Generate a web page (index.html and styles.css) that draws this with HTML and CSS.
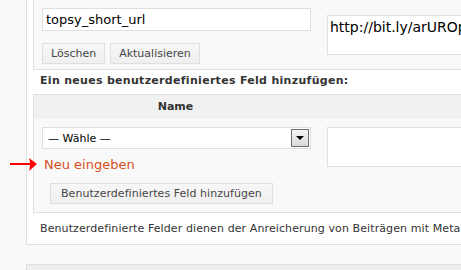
FILE: index.html
```html
<!DOCTYPE html>
<html>
<head>
    <title>Benutzerdefinierte Felder</title>
    <meta charset="utf-8">
    <link rel="stylesheet" href="styles.css">
</head>
<body>
    <div class="page">
        <div class="postbox">
            <div class="meta-list">
                <div class="meta-row">
                    <div class="meta-key">
                        <input type="text" class="field key-input" value="topsy_short_url">
                        <div class="key-buttons">
                            <button class="btn">Löschen</button>
                            <button class="btn">Aktualisieren</button>
                        </div>
                    </div>
                    <textarea class="field value-area">http://bit.ly/arUROp</textarea>
                </div>
            </div>

            <p class="new-title">Ein neues benutzerdefiniertes Feld hinzufügen:</p>

            <div class="new-meta">
                <div class="new-head">
                    <div class="col-name">Name</div>
                    <div class="col-value"></div>
                </div>
                <div class="new-body">
                    <div class="col-name">
                        <div class="select">
                            <span>— Wähle —</span>
                            <span class="select-arrow"></span>
                        </div>
                        <a class="enter-new">Neu eingeben</a>
                        <button class="btn add-btn">Benutzerdefiniertes Feld hinzufügen</button>
                    </div>
                    <div class="col-value">
                        <textarea class="field new-value"></textarea>
                    </div>
                </div>
            </div>

            <p class="meta-note">Benutzerdefinierte Felder dienen der Anreicherung von Beiträgen mit Meta</p>
        </div>
        <div class="postbox next-box"></div>
    </div>

    <!-- red annotation arrow pointing at "Neu eingeben" -->
    <svg class="pointer" width="28" height="16" viewBox="0 0 28 16">
        <rect x="0" y="6" width="22" height="2" fill="#f00"/>
        <path d="M19 1 L27 7 L19 14 Q21 7 19 1 Z" fill="#f00"/>
    </svg>
</body>
</html>
```

FILE: styles.css
```css
body {
    margin: 0;
    background: #f9f9f9;
    font-family: "DejaVu Sans", Verdana, sans-serif;
    color: #333;
    width: 461px;
    height: 270px;
    overflow: hidden;
    position: relative;
}
.page {
    padding-left: 26px;
    width: 760px;
}
.postbox {
    background: #fff;
    border: 1px solid #dfdfdf;
    border-top: none;
    padding: 0 6px;
}
.meta-list {
    border: 1px solid #dfdfdf;
    border-top: none;
    background: #f9f9f9;
}
.meta-row {
    display: flex;
    padding: 8px 0 5px 8px;
}
.meta-key {
    width: 269px;
}
.field {
    box-sizing: border-box;
    border: 1px solid #dfdfdf;
    background: #fff;
    color: #000;
    font-family: "DejaVu Sans", Verdana, sans-serif;
    font-size: 13px;
    margin: 0;
    outline: none;
}
.key-input {
    display: block;
    width: 269px;
    height: 23px;
    padding: 0 3px;
}
.key-buttons {
    display: flex;
    gap: 5px;
    margin-top: 12px;
}
.btn {
    box-sizing: border-box;
    height: 21px;
    padding: 0 8px;
    margin: 0;
    border: 1px solid #dfdfdf;
    background: linear-gradient(#f7f7f7, #efefef);
    color: #464646;
    font-family: "DejaVu Sans", Verdana, sans-serif;
    font-size: 11px;
    line-height: 19px;
}
.value-area {
    width: 320px;
    height: 40px;
    margin: 7px 0 0 16px;
    padding: 3px 2px;
    resize: none;
    overflow: hidden;
    font-size: 14px;
    line-height: 17px;
}
.new-title {
    margin: 0;
    padding: 4px 7px 7px;
    font-size: 11px;
    font-weight: bold;
    letter-spacing: 0.3px;
}
.new-meta {
    border: 1px solid #dfdfdf;
    border-right: none;
    background: #f9f9f9;
}
.new-head {
    display: flex;
    background: #f1f1f1;
    font-size: 11px;
    font-weight: bold;
    line-height: 24px;
    height: 24px;
    text-align: center;
}
.col-name {
    width: 283px;
    flex: none;
}
.col-value {
    flex: 1;
}
.new-body {
    display: flex;
    padding: 8px 0 8px;
}
.new-body .col-name {
    padding-left: 8px;
    box-sizing: border-box;
    text-align: left;
}
.select {
    box-sizing: border-box;
    width: 269px;
    height: 22px;
    border: 1px solid #dfdfdf;
    background: #fff;
    display: flex;
    align-items: center;
    padding: 0 1px 0 5px;
    font-size: 11px;
    color: #000;
}
.select-arrow {
    margin-left: auto;
    box-sizing: border-box;
    width: 18px;
    height: 18px;
    border: 1px solid #707070;
    background: linear-gradient(#f6f6f6, #d9d9d9);
    position: relative;
}
.select-arrow::after {
    content: "";
    position: absolute;
    left: 4px;
    top: 6px;
    border-left: 4px solid transparent;
    border-right: 4px solid transparent;
    border-top: 4px solid #000;
}
.enter-new {
    display: block;
    margin: 8px 0 0 2px;
    color: #d54e21;
    font-size: 13px;
    line-height: 15px;
}
.add-btn {
    display: block;
    margin: 11px 0 0 8px;
    padding: 0 10px;
    letter-spacing: 0.05px;
}
.new-body .col-value {
    padding-left: 10px;
}
.new-value {
    display: block;
    width: 320px;
    height: 40px;
    resize: none;
}
.meta-note {
    margin: 0;
    padding: 9px 7px 9px;
    font-size: 11px;
    letter-spacing: 0.1px;
    color: #333;
    white-space: nowrap;
}
.next-box {
    margin-top: 19px;
    height: 40px;
    background: #eee;
    border-top: 1px solid #dfdfdf;
}
.pointer {
    position: absolute;
    left: 10px;
    top: 157px;
}
```
